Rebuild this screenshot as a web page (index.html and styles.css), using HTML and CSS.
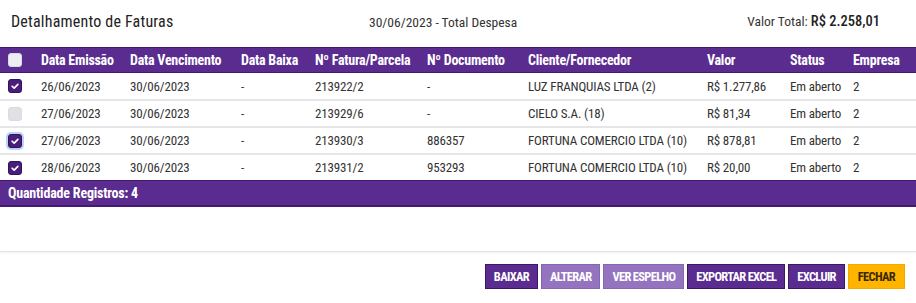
FILE: index.html
```html
<!DOCTYPE html>
<html lang="pt-BR">
<head>
    <meta charset="UTF-8">
    <title>Detalhamento de Faturas</title>
    <link rel="stylesheet" href="styles.css">
</head>
<body>
    <div class="modal">
        <div class="modal-header">
            <h1 class="title">Detalhamento de Faturas</h1>
            <span class="subtitle">30/06/2023 - Total Despesa</span>
            <span class="total">Valor Total: <strong>R$ 2.258,01</strong></span>
        </div>
        <div class="modal-body">
            <table class="grid">
                <colgroup>
                    <col style="width:33px">
                    <col style="width:89px">
                    <col style="width:111px">
                    <col style="width:74px">
                    <col style="width:112px">
                    <col style="width:101px">
                    <col style="width:179px">
                    <col style="width:83px">
                    <col style="width:63px">
                    <col>
                </colgroup>
                <thead>
                    <tr>
                        <th><span class="check"></span></th>
                        <th>Data Emissão</th>
                        <th>Data Vencimento</th>
                        <th>Data Baixa</th>
                        <th>Nº Fatura/Parcela</th>
                        <th>Nº Documento</th>
                        <th>Cliente/Fornecedor</th>
                        <th>Valor</th>
                        <th>Status</th>
                        <th>Empresa</th>
                    </tr>
                </thead>
                <tbody>
                    <tr>
                        <td><span class="check checked"><svg viewBox="0 0 10 10"><path d="M2.6 5.2 L4.3 6.8 L7.4 3.6"/></svg></span></td>
                        <td>26/06/2023</td>
                        <td>30/06/2023</td>
                        <td>-</td>
                        <td>213922/2</td>
                        <td>-</td>
                        <td>LUZ FRANQUIAS LTDA (2)</td>
                        <td>R$ 1.277,86</td>
                        <td>Em aberto</td>
                        <td>2</td>
                    </tr>
                    <tr>
                        <td><span class="check off"></span></td>
                        <td>27/06/2023</td>
                        <td>30/06/2023</td>
                        <td>-</td>
                        <td>213929/6</td>
                        <td>-</td>
                        <td>CIELO S.A. (18)</td>
                        <td>R$ 81,34</td>
                        <td>Em aberto</td>
                        <td>2</td>
                    </tr>
                    <tr>
                        <td><span class="check checked focus"><svg viewBox="0 0 10 10"><path d="M2.6 5.2 L4.3 6.8 L7.4 3.6"/></svg></span></td>
                        <td>27/06/2023</td>
                        <td>30/06/2023</td>
                        <td>-</td>
                        <td>213930/3</td>
                        <td>886357</td>
                        <td>FORTUNA COMERCIO LTDA (10)</td>
                        <td>R$ 878,81</td>
                        <td>Em aberto</td>
                        <td>2</td>
                    </tr>
                    <tr>
                        <td><span class="check checked"><svg viewBox="0 0 10 10"><path d="M2.6 5.2 L4.3 6.8 L7.4 3.6"/></svg></span></td>
                        <td>28/06/2023</td>
                        <td>30/06/2023</td>
                        <td>-</td>
                        <td>213931/2</td>
                        <td>953293</td>
                        <td>FORTUNA COMERCIO LTDA (10)</td>
                        <td>R$ 20,00</td>
                        <td>Em aberto</td>
                        <td>2</td>
                    </tr>
                </tbody>
                <tfoot>
                    <tr>
                        <td colspan="10">Quantidade Registros: 4</td>
                    </tr>
                </tfoot>
            </table>
        </div>
        <div class="modal-footer">
            <button class="btn">BAIXAR</button>
            <button class="btn disabled">ALTERAR</button>
            <button class="btn disabled">VER ESPELHO</button>
            <button class="btn">EXPORTAR EXCEL</button>
            <button class="btn">EXCLUIR</button>
            <button class="btn btn-close">FECHAR</button>
        </div>
    </div>
</body>
</html>
```
FILE: styles.css
```css
body {
    margin: 0;
    background: #fff;
    font-family: "Roboto Condensed", "Liberation Sans", sans-serif;
    color: #333;
}
.modal {
    width: 916px;
    height: 303px;
    display: flex;
    flex-direction: column;
}
.modal-header {
    display: flex;
    align-items: center;
    height: 43px;
    padding: 0 36px 0 11px;
}
.title {
    margin: 0;
    width: 358px;
    font-size: 16px;
    font-weight: normal;
    color: #222;
    letter-spacing: 0.2px;
}
.subtitle {
    font-size: 13.5px;
    color: #333;
}
.total {
    margin-left: auto;
    font-size: 13.5px;
    color: #333;
}
.total strong {
    font-weight: 500;
    font-size: 14.5px;
    color: #222;
}
.modal-body {
    height: 209px;
    padding-top: 4px;
    box-sizing: border-box;
    border-bottom: 1px solid #e3e3e3;
    box-shadow: 0 1px 2px rgba(0,0,0,0.06);
}
.grid {
    width: 100%;
    border-collapse: collapse;
    table-layout: fixed;
    font-size: 13px;
}
.grid th, .grid td {
    text-align: left;
    padding: 0 0 0 8px;
    white-space: nowrap;
    overflow: hidden;
}
.grid thead tr {
    background: #5b2c8f;
    border-top: 1px solid #44196f;
    border-bottom: 1px solid #44196f;
    height: 25px;
}
.grid th {
    color: #fff;
    font-weight: bold;
    font-size: 14px;
    letter-spacing: -0.25px;
}
.grid tbody tr {
    height: 27px;
    border-bottom: 2px solid #e6e6e8;
}
.grid tbody tr:last-child {
    border-bottom: none;
    height: 27px;
}
.grid tbody td {
    color: #333;
    padding-top: 1px;
    letter-spacing: -0.15px;
}
.grid tfoot tr {
    background: #5b2c8f;
    border-top: 1px solid #44196f;
    border-bottom: 2px solid #44196f;
    height: 25px;
}
.grid tfoot td {
    color: #fff;
    font-weight: bold;
    font-size: 14px;
    letter-spacing: -0.2px;
}
.check {
    display: block;
    box-sizing: border-box;
    width: 14px;
    height: 14px;
    border-radius: 3px;
    background: #eceef2;
    border: 1px solid #d9dce2;
}
.check.off {
    background: #dfe1e6;
}
.check.checked {
    background: #4a1d7c;
    border-color: #34115c;
}
.check.focus {
    box-shadow: 0 0 0 2px #b9d3f5;
}
.check svg {
    display: block;
    width: 12px;
    height: 12px;
}
.check path {
    fill: none;
    stroke: #fff;
    stroke-width: 1.4;
    stroke-linecap: round;
    stroke-linejoin: round;
}
.modal-footer {
    display: flex;
    justify-content: flex-end;
    gap: 3px;
    padding: 12px 11px 0 0;
}
.btn {
    height: 25px;
    padding: 0 8px;
    border: 1px solid #3d1766;
    background: #5b2c8f;
    color: #fff;
    font-family: "Roboto Condensed", "Liberation Sans", sans-serif;
    font-size: 12.5px;
    font-weight: bold;
    letter-spacing: -0.7px;
    cursor: pointer;
}
.btn.disabled {
    background: #9474bf;
    border-color: #8566b2;
}
.btn-close {
    background: #ffb400;
    border-color: #f3a900;
    color: #3a2a00;
    padding: 0 9px;
}
```
